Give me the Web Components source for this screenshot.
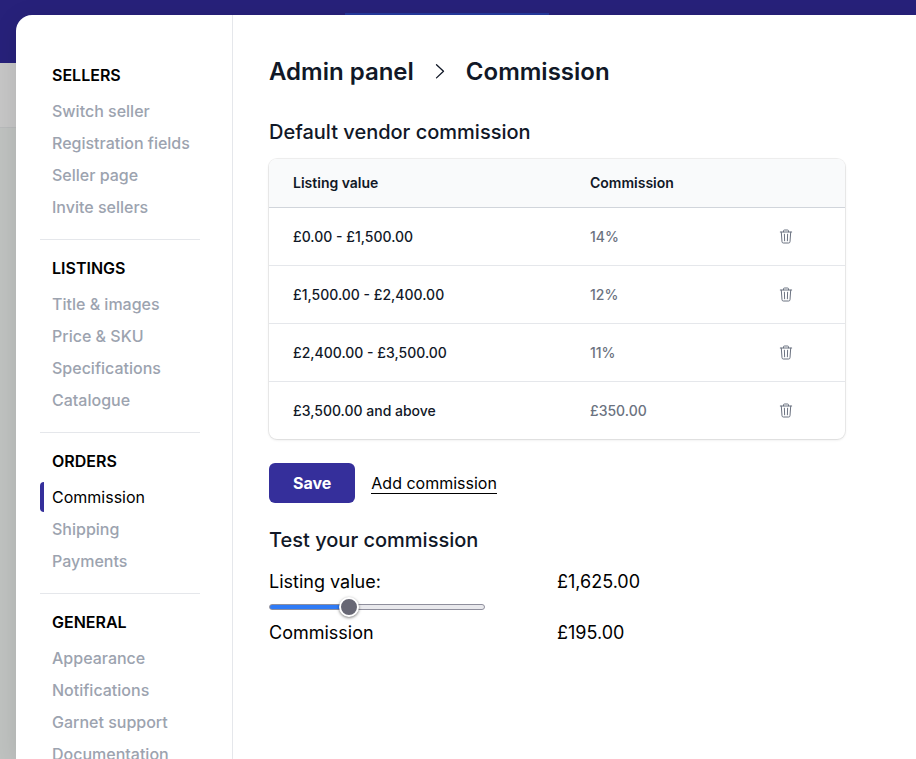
<!DOCTYPE html>
<html lang="en">
<head>
<meta charset="utf-8">
<meta name="viewport" content="width=device-width, initial-scale=1">
<title>Commission</title>
<style>
  html,
  body {
    height: 100%;
    margin: 0;
  }

  body {
    font-family: Inter, "Liberation Sans", sans-serif;
    font-size: 16px;
    line-height: 24px;
    color: #000;
    overflow: hidden;
  }
</style>
</head>
<body>
<admin-page>
  <side-menu slot="menu">
    <menu-section heading="SELLERS">
      <menu-item>Switch seller</menu-item>
      <menu-item>Registration fields</menu-item>
      <menu-item>Seller page</menu-item>
      <menu-item>Invite sellers</menu-item>
    </menu-section>
    <menu-section heading="LISTINGS">
      <menu-item>Title &amp; images</menu-item>
      <menu-item>Price &amp; SKU</menu-item>
      <menu-item>Specifications</menu-item>
      <menu-item>Catalogue</menu-item>
    </menu-section>
    <menu-section heading="ORDERS">
      <menu-item active>Commission</menu-item>
      <menu-item>Shipping</menu-item>
      <menu-item>Payments</menu-item>
    </menu-section>
    <menu-section heading="GENERAL">
      <menu-item>Appearance</menu-item>
      <menu-item>Notifications</menu-item>
      <menu-item>Garnet support</menu-item>
      <menu-item>Documentation</menu-item>
    </menu-section>
  </side-menu>
  <page-title parent="Admin panel">Commission</page-title>
  <section-title>Default vendor commission</section-title>
  <commission-table></commission-table>
  <form-actions></form-actions>
  <section-title>Test your commission</section-title>
  <commission-test></commission-test>
</admin-page>

<script>
const bands = [
  { from: 0, to: 1500, percent: 14 },
  { from: 1500, to: 2400, percent: 12 },
  { from: 2400, to: 3500, percent: 11 },
  { from: 3500, fixed: 350 },
];

const money = (value) => '£' + value.toLocaleString('en-GB', {
  minimumFractionDigits: 2,
  maximumFractionDigits: 2,
});

class AdminPage extends HTMLElement {
  constructor() {
    super();
    this.attachShadow({ mode: 'open' }).innerHTML = `
      <style>
        :host {
          display: block;
          position: relative;
          height: 100%;
          overflow: hidden;
          background: #bfc2c0;
        }

        .topbar {
          display: flex;
          align-items: center;
          box-sizing: border-box;
          height: 63px;
          padding: 13px 22px 10px 0;
          background: #27217a;
        }

        .subbar {
          height: 64px;
          background: #c6c6c6;
          border-bottom: 1px solid #b8babb;
        }

        .search {
          width: 204px;
          height: 40px;
          margin: 0 auto;
          background: #263a9e;
        }

        /* The panel lies over the dimmed shop page */
        .panel {
          position: absolute;
          inset: 15px 0 0 16px;
          display: flex;
          background: #fff;
          border-top-left-radius: 16px;
          box-shadow: 0 4px 24px rgba(0, 0, 0, .1);
          overflow: hidden;
        }

        main {
          flex: 1;
          min-width: 0;
          padding: 41px 24px 0 36px;
        }
      </style>
      <div class="topbar"><div class="search"></div></div>
      <div class="subbar"></div>
      <div class="panel">
        <slot name="menu"></slot>
        <main><slot></slot></main>
      </div>
    `;
  }
}

class SideMenu extends HTMLElement {
  constructor() {
    super();
    this.attachShadow({ mode: 'open' }).innerHTML = `
      <style>
        :host {
          display: block;
          flex: none;
          box-sizing: border-box;
          width: 217px;
          padding: 32px 32px 0 24px;
          border-right: 1px solid #e5e7eb;
        }
      </style>
      <nav><slot></slot></nav>
    `;
  }
}

class MenuSection extends HTMLElement {
  constructor() {
    super();
    this.attachShadow({ mode: 'open' });
  }

  connectedCallback() {
    this.shadowRoot.innerHTML = `
      <style>
        :host {
          display: block;
          padding: 16px 0;
          border-bottom: 1px solid #e5e7eb;
        }

        h3 {
          margin: 0 0 8px;
          padding-left: 12px;
          font-size: 16px;
          font-weight: 600;
        }
      </style>
      <h3>${this.getAttribute('heading')}</h3>
      <slot></slot>
    `;
  }
}

class MenuItem extends HTMLElement {
  constructor() {
    super();
    this.attachShadow({ mode: 'open' }).innerHTML = `
      <style>
        :host {
          display: block;
          padding: 1px 0;
        }

        a {
          display: block;
          padding-left: 8px;
          border-left: 4px solid transparent;
          line-height: 30px;
          font-weight: 500;
          color: #9ca3af;
          text-decoration: none;
          white-space: nowrap;
        }

        :host([active]) a {
          border-color: #352f9b;
          border-radius: 4px 0 0 4px;
          font-weight: 400;
          color: #000;
        }
      </style>
      <a href="#"><slot></slot></a>
    `;
  }
}

class PageTitle extends HTMLElement {
  constructor() {
    super();
    this.attachShadow({ mode: 'open' });
  }

  connectedCallback() {
    this.shadowRoot.innerHTML = `
      <style>
        :host {
          display: block;
          margin-bottom: 30px;
        }

        h1 {
          display: flex;
          align-items: center;
          gap: 16px;
          margin: 0;
          font-size: 24px;
          line-height: 32px;
          font-weight: 600;
          color: #111827;
        }

        svg {
          width: 20px;
          height: 20px;
        }
      </style>
      <h1>
        <span>${this.getAttribute('parent')}</span>
        <svg viewBox="0 0 20 20" fill="none" stroke="currentColor" stroke-width="1.3" stroke-linecap="round" stroke-linejoin="round" aria-hidden="true">
          <path d="M6.5 2.7l7 6.6-7 6.6"/>
        </svg>
        <slot></slot>
      </h1>
    `;
  }
}

class SectionTitle extends HTMLElement {
  constructor() {
    super();
    this.attachShadow({ mode: 'open' }).innerHTML = `
      <style>
        :host {
          display: block;
          margin-bottom: 13px;
        }

        h2 {
          margin: 0;
          font-size: 20px;
          line-height: 28px;
          font-weight: 500;
          color: #111827;
        }
      </style>
      <h2><slot></slot></h2>
    `;
  }
}

class CommissionTable extends HTMLElement {
  constructor() {
    super();
    this.attachShadow({ mode: 'open' });
  }

  connectedCallback() {
    this.render();
  }

  row(band) {
    const range = band.to ? `${money(band.from)} - ${money(band.to)}` : `${money(band.from)} and above`;
    const rate = band.percent ? `${band.percent}%` : money(band.fixed);

    return `
      <tr>
        <td class="range">${range}</td>
        <td>${rate}</td>
        <td>
          <button type="button" aria-label="Delete">
            <svg viewBox="0 0 14 16" fill="none" stroke="currentColor" stroke-linecap="round" stroke-linejoin="round" aria-hidden="true">
              <path d="M1.3 3h11.4M4.5 2.8V1.9q0-.9.9-.9h3.2q.9 0 .9.9v.9M2.3 3.2l.7 9.5q.1 1.3 1.3 1.3h5.4q1.2 0 1.3-1.3l.7-9.5M5.4 5.2l.2 6.6M8.6 5.2l-.2 6.6"/>
            </svg>
          </button>
        </td>
      </tr>
    `;
  }

  render() {
    this.shadowRoot.innerHTML = `
      <style>
        :host {
          display: block;
          max-width: 576px;
          margin-bottom: 24px;
          border-radius: 8px;
          box-shadow: 0 0 0 1px rgba(0, 0, 0, .06), 0 1px 3px rgba(0, 0, 0, .1);
          overflow: hidden;
        }

        table {
          width: 100%;
          table-layout: fixed;
          border-collapse: separate;
          border-spacing: 0;
          font-size: 14px;
          line-height: 20px;
        }

        th,
        td {
          padding: 0 24px;
          text-align: left;
        }

        th {
          height: 48px;
          background: #f9fafb;
          border-bottom: 1px solid #d1d5db;
          font-weight: 600;
          color: #111827;
        }

        td {
          height: 57px;
          border-bottom: 1px solid #e5e7eb;
          font-weight: 500;
          color: #6b7280;
        }

        tr:last-child td {
          border-bottom: none;
        }

        td.range {
          color: #111827;
        }

        th:nth-child(1) {
          width: 249px;
        }

        th:nth-child(3) {
          width: 42px;
        }

        button {
          display: block;
          padding: 0;
          border: none;
          background: none;
          color: #6b7280;
          cursor: pointer;
        }

        svg {
          display: block;
          width: 14px;
          height: 16px;
        }
      </style>
      <table>
        <thead>
          <tr><th>Listing value</th><th>Commission</th><th></th></tr>
        </thead>
        <tbody>${bands.map((band) => this.row(band)).join('')}</tbody>
      </table>
    `;
  }
}

class FormActions extends HTMLElement {
  constructor() {
    super();
    this.attachShadow({ mode: 'open' }).innerHTML = `
      <style>
        :host {
          display: flex;
          align-items: center;
          gap: 16px;
          margin-bottom: 23px;
        }

        button {
          height: 40px;
          padding: 0 24px;
          border: none;
          border-radius: 6px;
          background: #352f9b;
          color: #fff;
          font: inherit;
          font-weight: 700;
          cursor: pointer;
        }

        a {
          border-bottom: 1px solid #000;
          color: #000;
          line-height: 20px;
          text-decoration: none;
        }
      </style>
      <button type="button">Save</button>
      <a href="#">Add commission</a>
    `;
  }
}

class CommissionTest extends HTMLElement {
  constructor() {
    super();
    this.attachShadow({ mode: 'open' });
  }

  connectedCallback() {
    this.render();
    this.update();
  }

  update() {
    const input = this.shadowRoot.querySelector('#listing');
    const value = Number(input.value);
    const band = bands.find((item) => !item.to || value < item.to);

    input.style.setProperty('--done', `${(value / input.max) * 100}%`);
    this.shadowRoot.querySelector('#value').textContent = money(value);
    this.shadowRoot.querySelector('#commission').textContent = money(band.percent ? value * band.percent / 100 : band.fixed);
  }

  render() {
    this.shadowRoot.innerHTML = `
      <style>
        :host {
          display: grid;
          grid-template-columns: 1fr 1fr;
          max-width: 576px;
          padding-top: 1px;
          font-size: 18px;
          line-height: 28px;
        }

        input {
          grid-column: 1 / -1;
          appearance: none;
          box-sizing: border-box;
          width: 216px;
          height: 6px;
          margin: 8px 0 9px;
          border: 1px solid #8f8f9d;
          border-radius: 3px;
          background: linear-gradient(to right, #2f7bf6 var(--done), #e9e9ed var(--done)) border-box;
        }

        input::-webkit-slider-thumb {
          appearance: none;
          box-sizing: border-box;
          width: 20px;
          height: 20px;
          border: 2px solid #fff;
          border-radius: 50%;
          background: #676774;
          box-shadow: 0 1px 3px rgba(0, 0, 0, .5);
        }
      </style>
      <label for="listing">Listing value:</label>
      <output id="value" for="listing"></output>
      <input id="listing" type="range" min="0" max="4550" step="25" value="1625">
      <span>Commission</span>
      <output id="commission" for="listing"></output>
    `;

    this.shadowRoot.querySelector('#listing').addEventListener('input', () => this.update());
  }
}

customElements.define('admin-page', AdminPage);
customElements.define('side-menu', SideMenu);
customElements.define('menu-section', MenuSection);
customElements.define('menu-item', MenuItem);
customElements.define('page-title', PageTitle);
customElements.define('section-title', SectionTitle);
customElements.define('commission-table', CommissionTable);
customElements.define('form-actions', FormActions);
customElements.define('commission-test', CommissionTest);
</script>
</body>
</html>
